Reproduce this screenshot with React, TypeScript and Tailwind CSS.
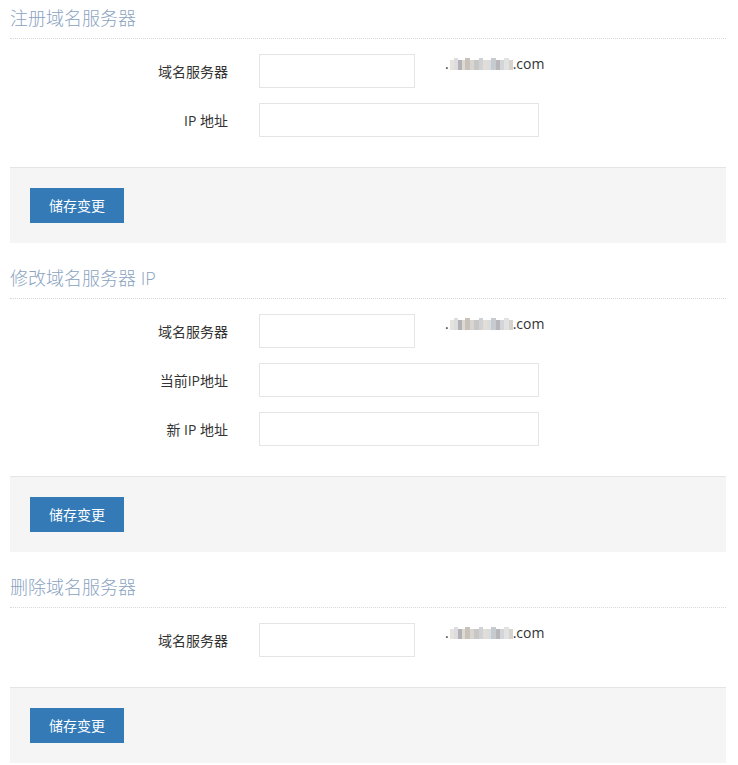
import React from "react";

const blur = [
  ["#e6e2dc", 4], ["#dcdde0", 4], ["#b3b1b6", 4], ["#ddd9d3", 3], ["#c9c2bb", 5],
  ["#d8d6d3", 4], ["#c9c7c4", 5], ["#cfd3d7", 4], ["#e4ddd4", 4], ["#d9dde0", 4],
  ["#c6cbd0", 5], ["#b8b5bb", 4], ["#d3d6d8", 4], ["#e2e2e2", 5], ["#d6d3cf", 4],
] as const;

const Domain = () => {
  let x = 0;
  return (
    <div className="flex items-center text-[14px] leading-[20px] text-[#333]">
      <span>.</span>
      <svg width="63" height="12" className="ml-[1px]">
        {blur.map(([c, w], i) => {
          const r = <rect key={i} x={x} y={i % 3 === 1 ? 0 : 2} width={w} height={i % 3 === 1 ? 12 : 10} fill={c} />;
          x += w;
          return r;
        })}
      </svg>
      <span>.com</span>
    </div>
  );
};

type Field = { label: string; wide?: boolean; domain?: boolean };

const Section = ({ title, fields }: { title: string; fields: Field[] }) => (
  <div>
    <h3 className="pt-[7px] pb-[9px] text-[18px] leading-[22px] font-light text-[#8aa3bf] border-b border-dotted border-[#d9d9d9]">
      {title}
    </h3>
    <div className="pt-[15px] pb-[15px]">
      {fields.map((f) => (
        <div key={f.label} className="flex mb-[15px]">
          <label className="w-[218px] h-[34px] flex items-center justify-end text-[14px] text-[#333]">
            {f.label}
          </label>
          <input
            className={`ml-[31px] h-[34px] border border-[#e5e5e5] bg-white outline-none ${f.wide ? "w-[280px]" : "w-[156px]"}`}
          />
          {f.domain && (
            <div className="ml-[30px]">
              <Domain />
            </div>
          )}
        </div>
      ))}
    </div>
    <div className="border-t border-[#e5e5e5] bg-[#f5f5f5] p-[20px]">
      <button className="h-[35px] px-[19px] bg-[#337ab7] text-white text-[14px]">储存变更</button>
    </div>
  </div>
);

export default function App() {
  return (
    <div
      className="pl-[10px] pr-[12px] bg-white flex flex-col gap-[17px]"
      style={{ fontFamily: '"Open Sans", "Noto Sans CJK SC", sans-serif' }}
    >
      <Section
        title="注册域名服务器"
        fields={[
          { label: "域名服务器", domain: true },
          { label: "IP 地址", wide: true },
        ]}
      />
      <Section
        title="修改域名服务器 IP"
        fields={[
          { label: "域名服务器", domain: true },
          { label: "当前IP地址", wide: true },
          { label: "新 IP 地址", wide: true },
        ]}
      />
      <Section title="删除域名服务器" fields={[{ label: "域名服务器", domain: true }]} />
    </div>
  );
}
